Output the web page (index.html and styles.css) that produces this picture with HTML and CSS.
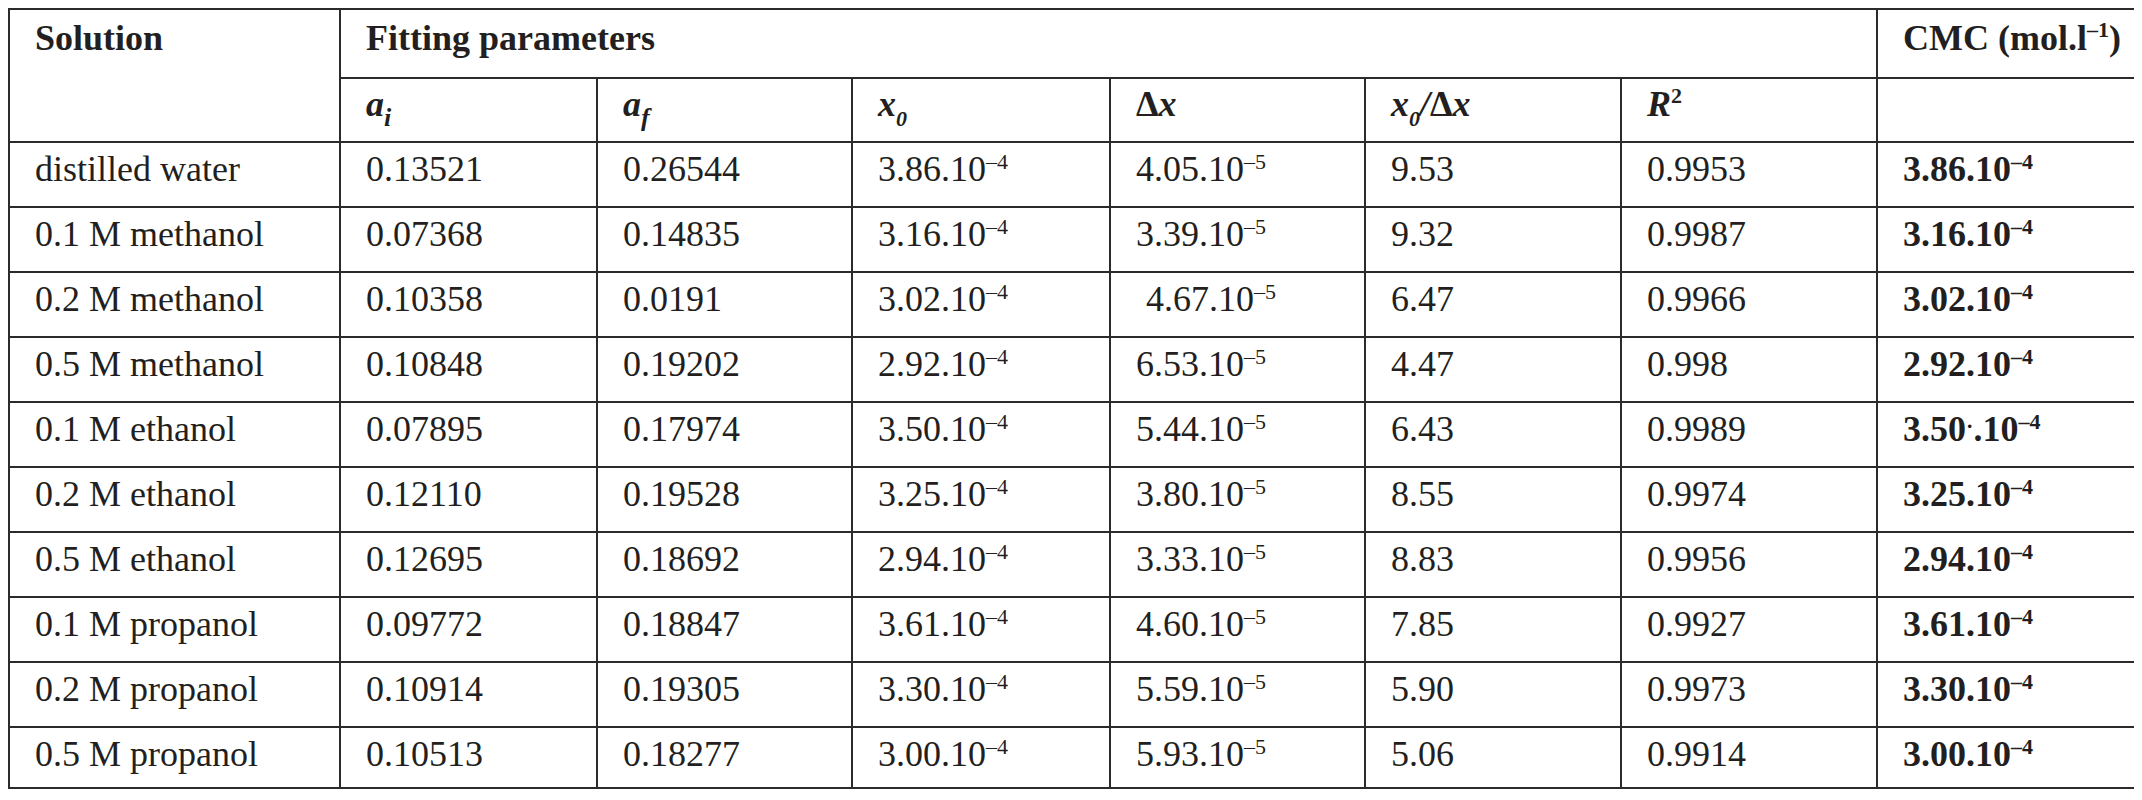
FILE: index.html
```html
<!DOCTYPE html>
<html lang="en">
<head>
<meta charset="utf-8">
<title>CMC fitting parameters</title>
<link rel="stylesheet" href="styles.css">
</head>
<body>
<table class="grid">
  <colgroup>
    <col class="c-sol">
    <col class="c-p1">
    <col class="c-p2">
    <col class="c-p3">
    <col class="c-p4">
    <col class="c-p5">
    <col class="c-p6">
    <col class="c-cmc">
  </colgroup>
  <thead>
    <tr class="h1">
      <th rowspan="2" class="head">Solution</th>
      <th colspan="6" class="head tick">Fitting parameters</th>
      <th class="head tick">CMC (mol.l<sup class="hsup">–1</sup>)</th>
    </tr>
    <tr class="h2">
      <th class="var"><i>a</i><sub class="vsub-i">i</sub></th>
      <th class="var"><i>a</i><sub class="vsub-i">f</sub></th>
      <th class="var"><i>x</i><sub class="vsub">0</sub></th>
      <th class="var"><span class="up">Δ</span><i>x</i></th>
      <th class="var"><i>x</i><sub class="vsub">0</sub><i>/</i><span class="up">Δ</span><i>x</i></th>
      <th class="var"><i>R</i><sup class="vsup">2</sup></th>
      <th class="var"></th>
    </tr>
  </thead>
  <tbody>
    <tr class="row">
      <td>distilled water</td><td>0.13521</td><td>0.26544</td>
      <td>3.86.10<sup class="ex">–4</sup></td><td>4.05.10<sup class="ex">–5</sup></td>
      <td>9.53</td><td>0.9953</td><td class="cmc">3.86.10<sup class="ex">–4</sup></td>
    </tr>
    <tr class="row">
      <td>0.1 M methanol</td><td>0.07368</td><td>0.14835</td>
      <td>3.16.10<sup class="ex">–4</sup></td><td>3.39.10<sup class="ex">–5</sup></td>
      <td>9.32</td><td>0.9987</td><td class="cmc">3.16.10<sup class="ex">–4</sup></td>
    </tr>
    <tr class="row">
      <td>0.2 M methanol</td><td>0.10358</td><td>0.0191</td>
      <td>3.02.10<sup class="ex">–4</sup></td><td class="shift">4.67.10<sup class="ex">–5</sup></td>
      <td>6.47</td><td>0.9966</td><td class="cmc">3.02.10<sup class="ex">–4</sup></td>
    </tr>
    <tr class="row">
      <td>0.5 M methanol</td><td>0.10848</td><td>0.19202</td>
      <td>2.92.10<sup class="ex">–4</sup></td><td>6.53.10<sup class="ex">–5</sup></td>
      <td>4.47</td><td>0.998</td><td class="cmc">2.92.10<sup class="ex">–4</sup></td>
    </tr>
    <tr class="row">
      <td>0.1 M ethanol</td><td>0.07895</td><td>0.17974</td>
      <td>3.50.10<sup class="ex">–4</sup></td><td>5.44.10<sup class="ex">–5</sup></td>
      <td>6.43</td><td>0.9989</td><td class="cmc">3.50<span class="mid">·</span>.10<sup class="ex">–4</sup></td>
    </tr>
    <tr class="row">
      <td>0.2 M ethanol</td><td>0.12110</td><td>0.19528</td>
      <td>3.25.10<sup class="ex">–4</sup></td><td>3.80.10<sup class="ex">–5</sup></td>
      <td>8.55</td><td>0.9974</td><td class="cmc">3.25.10<sup class="ex">–4</sup></td>
    </tr>
    <tr class="row">
      <td>0.5 M ethanol</td><td>0.12695</td><td>0.18692</td>
      <td>2.94.10<sup class="ex">–4</sup></td><td>3.33.10<sup class="ex">–5</sup></td>
      <td>8.83</td><td>0.9956</td><td class="cmc">2.94.10<sup class="ex">–4</sup></td>
    </tr>
    <tr class="row">
      <td>0.1 M propanol</td><td>0.09772</td><td>0.18847</td>
      <td>3.61.10<sup class="ex">–4</sup></td><td>4.60.10<sup class="ex">–5</sup></td>
      <td>7.85</td><td>0.9927</td><td class="cmc">3.61.10<sup class="ex">–4</sup></td>
    </tr>
    <tr class="row">
      <td>0.2 M propanol</td><td>0.10914</td><td>0.19305</td>
      <td>3.30.10<sup class="ex">–4</sup></td><td>5.59.10<sup class="ex">–5</sup></td>
      <td>5.90</td><td>0.9973</td><td class="cmc">3.30.10<sup class="ex">–4</sup></td>
    </tr>
    <tr class="row last">
      <td>0.5 M propanol</td><td>0.10513</td><td>0.18277</td>
      <td>3.00.10<sup class="ex">–4</sup></td><td>5.93.10<sup class="ex">–5</sup></td>
      <td>5.06</td><td>0.9914</td><td class="cmc">3.00.10<sup class="ex">–4</sup></td>
    </tr>
  </tbody>
</table>
</body>
</html>
```

FILE: styles.css
```css
html, body {
  background: #ffffff;
}

body {
  margin: 8px;
  font-family: "Liberation Serif", "Times New Roman", serif;
  color: #231f20;
}

.grid {
  border-collapse: collapse;
  table-layout: fixed;
  width: 2128px;
  font-size: 36px;
  line-height: 40px;
}

.c-sol { width: 331px; }
.c-p1 { width: 257px; }
.c-p2 { width: 255px; }
.c-p3 { width: 258px; }
.c-p4 { width: 255px; }
.c-p5 { width: 256px; }
.c-p6 { width: 256px; }
.c-cmc { width: 260px; }

.grid th,
.grid td {
  border: 2px solid #2b2b2b;
  padding: 6px 0 0 25px;
  text-align: left;
  vertical-align: top;
  white-space: nowrap;
  font-weight: normal;
  overflow: visible;
}

.h1 { height: 69px; }
.h2 { height: 64px; }
.row { height: 65px; }
.row.last { height: 61px; }

.grid .head {
  font-weight: bold;
  padding-top: 8px;
}

.tick {
  position: relative;
}

.tick::before {
  content: "";
  position: absolute;
  left: -2px;
  top: -7px;
  width: 2px;
  height: 6px;
  background: #2b2b2b;
}

.grid .var {
  font-weight: bold;
  font-style: italic;
  padding-top: 5px;
}

.var i {
  font-style: italic;
}

.var .up {
  font-style: normal;
}

.vsub-i {
  font-size: 26px;
  line-height: 0;
  vertical-align: -10px;
}

.vsub {
  font-size: 22px;
  line-height: 0;
  vertical-align: -10px;
}

.vsup {
  font-size: 22px;
  line-height: 0;
  vertical-align: 13px;
  font-style: normal;
}

.hsup {
  font-size: 22px;
  line-height: 0;
  vertical-align: 13px;
}

.ex {
  font-size: 22px;
  line-height: 0;
  vertical-align: 12px;
}

.grid .cmc {
  font-weight: bold;
}

.shift {
  text-indent: 10px;
}

.mid {
  font-size: 22px;
  vertical-align: 8px;
  line-height: 0;
}
```
